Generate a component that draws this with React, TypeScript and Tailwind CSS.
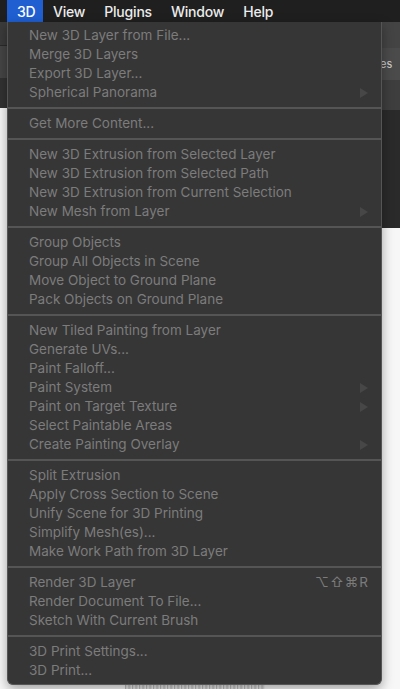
import { Fragment } from "react";

type Item = { label: string; sub?: boolean; shortcut?: string };

// groups of the 3D menu, split by separators
const GROUPS: Item[][] = [
  [
    { label: "New 3D Layer from File..." },
    { label: "Merge 3D Layers" },
    { label: "Export 3D Layer..." },
    { label: "Spherical Panorama", sub: true },
  ],
  [{ label: "Get More Content..." }],
  [
    { label: "New 3D Extrusion from Selected Layer" },
    { label: "New 3D Extrusion from Selected Path" },
    { label: "New 3D Extrusion from Current Selection" },
    { label: "New Mesh from Layer", sub: true },
  ],
  [
    { label: "Group Objects" },
    { label: "Group All Objects in Scene" },
    { label: "Move Object to Ground Plane" },
    { label: "Pack Objects on Ground Plane" },
  ],
  [
    { label: "New Tiled Painting from Layer" },
    { label: "Generate UVs..." },
    { label: "Paint Falloff..." },
    { label: "Paint System", sub: true },
    { label: "Paint on Target Texture", sub: true },
    { label: "Select Paintable Areas" },
    { label: "Create Painting Overlay", sub: true },
  ],
  [
    { label: "Split Extrusion" },
    { label: "Apply Cross Section to Scene" },
    { label: "Unify Scene for 3D Printing" },
    { label: "Simplify Mesh(es)..." },
    { label: "Make Work Path from 3D Layer" },
  ],
  [
    { label: "Render 3D Layer", shortcut: "⌥⇧⌘R" },
    { label: "Render Document To File..." },
    { label: "Sketch With Current Brush" },
  ],
  [{ label: "3D Print Settings..." }, { label: "3D Print..." }],
];

const MENUS = ["View", "Plugins", "Window", "Help"];

function MenuRow({ item }: { item: Item }) {
  return (
    <div className="flex h-[19px] items-center justify-between pl-[21px] pr-[12px] text-[13.5px] text-[#7c7c7c]">
      <span>{item.label}</span>
      {item.sub && (
        <svg width="8" height="10" viewBox="0 0 8 10" className="mr-[1px]">
          <path d="M0 0 L8 5 L0 10 Z" fill="#474747" />
        </svg>
      )}
      {item.shortcut && <span className="tracking-[1px]">{item.shortcut}</span>}
    </div>
  );
}

export default function App() {
  return (
    <div
      className="relative h-[689px] w-[400px] overflow-hidden bg-[#f7f7f7]"
      style={{ fontFamily: "Inter, 'Noto Sans', sans-serif" }}
    >
      {/* menubar */}
      <div className="flex h-[22px] items-center bg-[#1f1f1f] pl-[7px] text-[14px] font-medium tracking-[-0.2px] text-[#ececec]">
        <div className="flex h-full items-center bg-[#1f5fd1] pl-[10px] pr-[8px] text-white">3D</div>
        {MENUS.map((m) => (
          <div key={m} className="flex h-full items-center px-[9.5px]">
            {m}
          </div>
        ))}
      </div>

      {/* app chrome behind the dropdown */}
      <div className="flex justify-between">
        <div className="flex w-[8px] flex-col">
          <div className="h-[24px] border-b border-[#2a2a2a] bg-[#3b3b3b]" />
          <div className="h-[32px] bg-[#454545]" />
          <div className="h-[30px] bg-[#323232]" />
        </div>
        <div className="flex w-[20px] flex-col">
          <div className="h-[26px] bg-[#444444]" />
          <div className="flex h-[32px] items-center bg-[#4b4b4b] text-[11px] text-[#d0d0d0]">es</div>
          <div className="h-[30px] bg-[#3e3e3e]" />
          <div className="h-[118px] bg-[#2a2a2a]" />
        </div>
      </div>

      {/* bottom speckle */}
      <div className="absolute bottom-0 left-[125px] h-[4px] w-[140px] bg-[repeating-linear-gradient(90deg,#888_0px,#f2f2f2_2px,#aaa_4px,#f7f7f7_7px)] opacity-70" />

      {/* dropdown */}
      <div className="absolute left-[7px] top-[22px] w-[375px] rounded-b-[6px] border-x border-b border-[#555555] bg-[#363636] pb-[4px] pt-[4px] shadow-[0_4px_12px_rgba(0,0,0,0.35)]">
        {GROUPS.map((group, gi) => (
          <Fragment key={gi}>
            {gi > 0 && (
              <div className="flex h-[12px] items-center">
                <div className="h-[2px] w-full bg-[#555555]" />
              </div>
            )}
            {group.map((item) => (
              <MenuRow key={item.label} item={item} />
            ))}
          </Fragment>
        ))}
      </div>
    </div>
  );
}
